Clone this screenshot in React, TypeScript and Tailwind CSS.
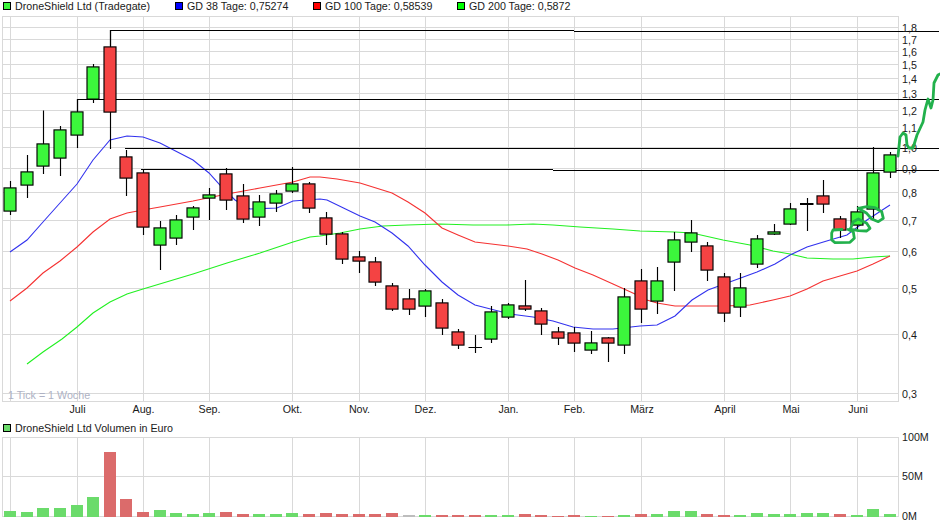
const G = "#3cf73c";
const R = "#f44343";
// [centre x, body top, body bottom, wick top, wick bottom, up?]
const candles: [number, number, number, number, number, number][] = [
  [10, 187.5, 211.5, 181, 215, 1],
  [27, 171.5, 185.5, 155, 198, 1],
  [43, 143.5, 166.5, 110.5, 174, 1],
  [60, 129.5, 158.5, 126, 176, 1],
  [77, 111.5, 135.5, 99, 148, 1],
  [93, 66.5, 99.5, 64, 103, 1],
  [110, 46.5, 112.5, 30, 149, 0],
  [126, 156.5, 178.5, 150, 196, 0],
  [143, 172.5, 227.5, 169, 235, 0],
  [160, 227.5, 245.5, 221, 270, 1],
  [176, 219.5, 238.5, 215, 245, 1],
  [193, 207.5, 217.5, 206, 230, 1],
  [209, 194.5, 198.5, 188, 220, 1],
  [226, 173.5, 200.5, 168, 210, 0],
  [243, 195.5, 219.5, 184, 223, 0],
  [259, 201.5, 217.5, 195, 226, 1],
  [276, 193.5, 203.5, 190, 212, 1],
  [292, 183.5, 191.5, 167, 193, 1],
  [309, 183.5, 208.5, 182, 213, 0],
  [326, 217.5, 234.5, 212, 245, 0],
  [342, 233.5, 259.5, 232, 264, 0],
  [359, 256.5, 261.5, 251, 273, 0],
  [375, 261.5, 282.5, 257, 286, 0],
  [392, 285.5, 309.5, 283, 311, 0],
  [409, 298.5, 309.5, 289, 315, 0],
  [425, 290.5, 306.5, 289, 317, 1],
  [442, 302.5, 328.5, 299, 335, 0],
  [458, 331.5, 345.5, 329, 349, 0],
  [491, 311.5, 339.5, 306, 343, 1],
  [508, 304.5, 317.5, 303, 319, 1],
  [525, 305.5, 309.5, 280, 311, 0],
  [541, 310.5, 324.5, 308, 335, 0],
  [558, 331.5, 338.5, 327, 345, 0],
  [574, 332.5, 343.5, 327, 352, 0],
  [591, 342.5, 350.5, 331, 354, 1],
  [608, 337.5, 343.5, 337, 362, 0],
  [624, 296.5, 345.5, 288, 354, 1],
  [641, 280.5, 309.5, 269, 323, 0],
  [657, 280.5, 301.5, 267, 314, 1],
  [674, 239.5, 262.5, 232, 291, 1],
  [691, 232.5, 242.5, 220, 252, 1],
  [707, 245.5, 270.5, 242, 281, 0],
  [724, 276.5, 313.5, 273, 322, 0],
  [740, 287.5, 307.5, 273, 317, 1],
  [757, 238.5, 264.5, 235, 268, 1],
  [774, 231.5, 234.5, 224, 235, 1],
  [790, 208.5, 224.5, 203, 225, 1],
  [823, 195.5, 204.5, 180, 213, 0],
  [840, 218.5, 230.5, 216, 238, 0],
  [857, 211.5, 225.5, 206, 231, 1],
  [873, 172.5, 209.5, 147, 221, 1],
  [890, 154.5, 172.5, 152, 178, 1],
];
const xGrid = [10.5, 77.5, 143.5, 209.5, 292.5, 359.5, 425.5, 508.5, 574.5, 641.5, 724.5, 790.5, 857.5];
const yTicks: [string, number][] = [
  ["1,8", 27.5], ["1,7", 39.5], ["1,6", 51.5], ["1,5", 64.5], ["1,4", 78.5], ["1,3", 93.5], ["1,2", 110.5], ["1,1", 127.5],
  ["1,0", 147.5], ["0,9", 168.5], ["0,8", 192.5], ["0,7", 220.5], ["0,6", 251.5], ["0,5", 288.5], ["0,4", 334.5], ["0,3", 393.5],
];
const xLabels: [string, number][] = [
  ["Juli", 77.5], ["Aug.", 143.5], ["Sep.", 209.5], ["Okt.", 292.5], ["Nov.", 359.5], ["Dez.", 425.5], ["Jan.", 508.5], ["Feb.", 574.5], ["März", 642], ["April", 725], ["Mai", 791], ["Juni", 858],
];
const blue = "10,252 27,240 43,222 60,203 77,184 93,160 110,140 127,136 143,137 160,143 193,160 209,173 220,185 235,200 250,209 277,208 293,201 320,199 327,200 360,216 375,222 392,233 408,246 425,265 442,282 458,295 475,305 510,314 533,317 553,321 573,327 593,329 613,329 640,326 657,325 675,316 692,300 708,290 727,283 757,272 775,264 790,255 807,247 830,240 847,235 867,220 890,205";
const red = "10,301 27,288 43,273 60,261 77,247 93,232 110,219 127,213 143,210 160,207 193,201 227,194 260,188 293,182 310,177 320,177 337,179 360,183 392,193 408,202 425,213 442,228 458,235 475,242 508,246 527,249 542,254 558,260 575,268 593,275 613,284 635,294 640,298 657,303 675,306 692,306 708,306 725,306 750,305 773,300 790,296 807,289 823,281 840,276 857,271 873,264 890,256";
const green = "27,364 43,352 62,339 77,327 93,313 110,302 127,294 143,289 193,274 227,263 260,253 293,242 310,237 320,236 340,233 360,229 383,226 407,225 440,224 473,225 507,225 533,224 553,225 580,227 613,229 640,231 675,232 692,233 723,240 750,245 773,251 790,254 807,258 833,259 853,259 873,257 890,256";
const scribbles = [
  "898,156 900,137 903,133 906,135 907,145 909,148 913,148 917,135 923,122 925,110 928,99 931,108 933,100 934,83 938,75 940,74",
  "842,229.5 833,230 831.7,233 831.7,240 835,242.7 850,242.3 854.3,238.3 853.3,231.7 848,229.5",
  "850,230 853.3,221.7 858.3,219 866.7,223.3 870,228.3 866.7,231 858.3,230.7 850,229",
  "858.3,208.3 866.7,206.7 875,207.7 881.7,211.7 883.3,218.3 878.3,221.7 871.7,219 866.7,213.3 858.3,208.3",
];
// [centre x, height in px, colour]
const VG = "#6bdb6b";
const VR = "#db6b6b";
const vols: [number, number, string][] = [
  [10, 6, VG], [27, 5, VG], [43, 9, VG], [60, 9, VG], [77, 12, VG], [93, 20, VG], [110, 65, VR], [126, 18, VR], [143, 5, VR],
  [160, 7, VG], [176, 4, VG], [193, 3, VG], [209, 4, VG], [226, 5, VR], [243, 3, VR], [259, 3, VG], [276, 3, VG], [292, 4, VG], [309, 3, VR],
  [326, 4, VR], [342, 3, VR], [359, 3, VR], [375, 3, VR], [392, 4, VR], [409, 2, "#bdbdbd"], [425, 2, VG], [442, 2, VR], [458, 2, VR], [475, 2, VR],
  [491, 2, VG], [508, 2, VG], [525, 3, VR], [541, 2, VR], [558, 1, VR], [574, 2, VR], [591, 1, VG], [608, 1, VR], [624, 2, VG], [641, 3, VR],
  [657, 3, VG], [674, 6, VG], [691, 6, VG], [707, 3, VR], [724, 2, VR], [740, 2, VG], [757, 4, VG], [774, 3, VG], [790, 3, VG], [807, 4, VG],
  [823, 4, VG], [840, 3, VR], [857, 2, VG], [873, 8, VG], [890, 3, VG],
];

function Swatch({ color }: { color: string }) {
  return <span className="w-2 h-2 border border-black box-border shrink-0" style={{ backgroundColor: color }} />;
}
function LegendItem({ color, label, w }: { color: string; label: string; w: string }) {
  return (
    <div className={`flex items-center gap-[4px] ${w}`}>
      <Swatch color={color} />
      <span>{label}</span>
    </div>
  );
}

export default function App() {
  return (
    <div className="w-[940px] h-[526px] bg-white flex flex-col overflow-hidden text-[10.7px] leading-none text-[#1a1a1a] font-['Liberation_Sans',Arial,sans-serif]">
      <div className="h-[16px] pl-[3px] pb-[4px] flex items-center">
        <LegendItem color={G} label="DroneShield Ltd (Tradegate)" w="w-[172px]" />
        <LegendItem color="#0000ff" label="GD 38 Tage: 0,75274" w="w-[138px]" />
        <LegendItem color="#ff0000" label="GD 100 Tage: 0,58539" w="w-[144px]" />
        <LegendItem color="#00ff00" label="GD 200 Tage: 0,5872" w="w-[140px]" />
      </div>
      <svg className="w-[940px] h-[404px] block shrink-0" viewBox="0 16 940 404">
        <g stroke="#d9d9d9" strokeWidth="1" shapeRendering="crispEdges" fill="none">
          <rect x="2.5" y="16.5" width="896" height="385" />
          {xGrid.map((x) => <line key={x} x1={x} x2={x} y1="16" y2="401" />)}
          {yTicks.map(([t, y]) => <line key={t} x1="2" x2="898" y1={y} y2={y} />)}
        </g>
        <text x="8" y="399" fill="#aeb2c4" fontSize="10.7">1 Tick = 1 Woche</text>
        <polyline points={green} fill="none" stroke="#22f022" strokeWidth="1.1" />
        <polyline points={red} fill="none" stroke="#f53232" strokeWidth="1.1" />
        <polyline points={blue} fill="none" stroke="#3232ee" strokeWidth="1.1" />
        <g stroke="#000" strokeWidth="1.15" fill="none">
          <path d="M110.5 46V30.5H574M574 31.5H939M77.5 111V99.5H939M125 148.5H939M141 169.5H553M553 170.5H939" />
          {candles.map(([x, t, b, wt, wb, up]) => (
            <g key={x}>
              <line x1={x + 0.5} x2={x + 0.5} y1={wt} y2={wb} />
              <rect x={x - 6} y={t + 0.4} width="12" height={b - t - 0.8} fill={up ? G : R} />
            </g>
          ))}
          <path d="M468.5 347.5H482M475.5 335V353" />
          <path d="M800 204H813.5" strokeWidth="2" />
          <path d="M807.5 198V231" />
        </g>
        <g fill="#1a1a1a" fontSize="10.7">
          {yTicks.map(([t, y]) => <text key={t} x="902" y={y + 4}>{t}</text>)}
          {xLabels.map(([t, x]) => <text key={t} x={x} y="413" textAnchor="middle">{t}</text>)}
        </g>
        <g fill="none" stroke="#22b14c" strokeWidth="2.8" strokeLinejoin="round" strokeLinecap="round">
          {scribbles.map((p) => <polyline key={p} points={p} />)}
        </g>
      </svg>
      <div className="h-[6px] mt-[5px] pl-[3px] flex items-center">
        <LegendItem color={VG} label="DroneShield Ltd Volumen in Euro" w="w-[300px]" />
      </div>
      <svg className="w-[940px] h-[95px] block shrink-0" viewBox="0 431 940 95">
        <g stroke="#d9d9d9" strokeWidth="1" shapeRendering="crispEdges" fill="none">
          <rect x="2.5" y="437.5" width="896" height="79" />
          <line x1="2" x2="898" y1="476.5" y2="476.5" />
          {xGrid.map((x) => <line key={x} x1={x} x2={x} y1="437" y2="516" />)}
        </g>
        {vols.map(([x, h, c]) => <rect key={x} x={x - 6} y={517 - h} width="12" height={h} fill={c} />)}
        <g fill="#1a1a1a" fontSize="10.7">
          <text x="902" y="441">100M</text>
          <text x="902" y="480">50M</text>
          <text x="902" y="520">0M</text>
        </g>
      </svg>
    </div>
  );
}
